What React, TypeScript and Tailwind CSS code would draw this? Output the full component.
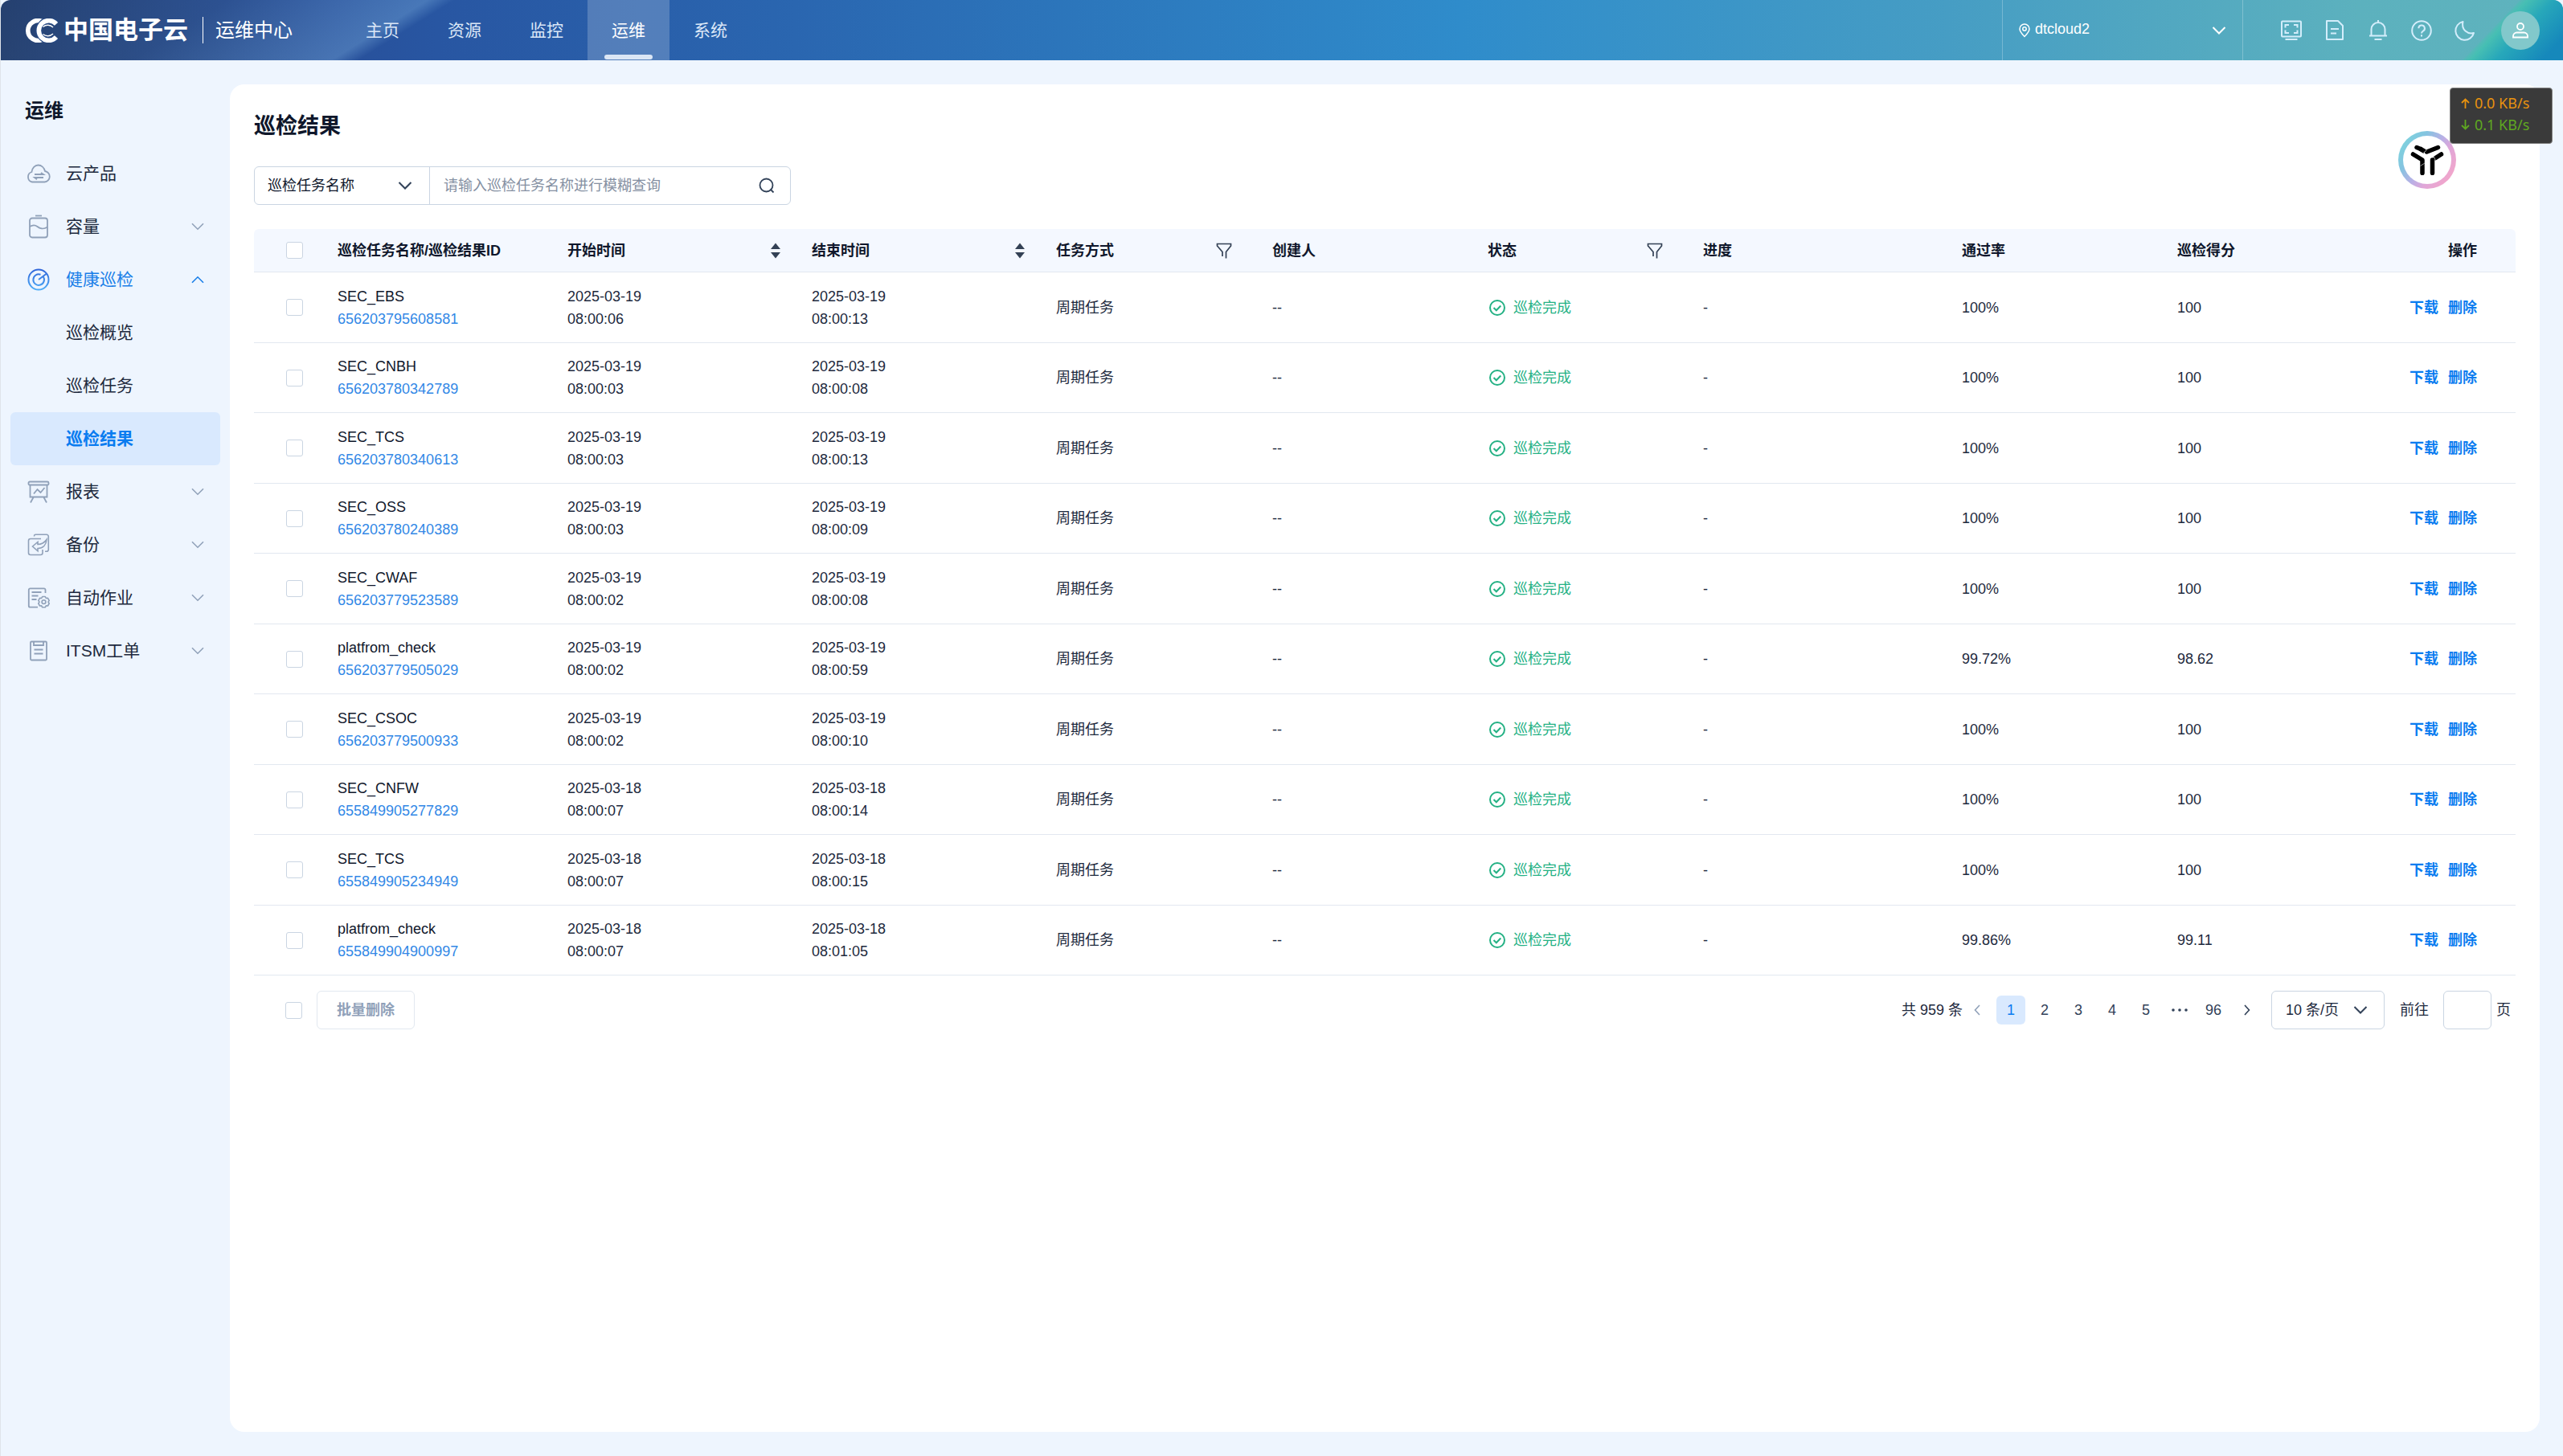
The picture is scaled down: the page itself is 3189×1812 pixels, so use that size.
import React from "react";

type IconProps = { className?: string };

const Chevron = ({ className = "" }: IconProps) => (
  <svg viewBox="0 0 18 10" width="18" height="10" fill="none" stroke="currentColor" strokeWidth="2" className={className} aria-hidden="true">
    <path d="M1.5 1 9 8.5 16.5 1" />
  </svg>
);

const SideChevron = ({ className = "" }: IconProps) => (
  <svg viewBox="0 0 16 10" width="16" height="10" fill="none" stroke="currentColor" strokeWidth="1.6" className={className} aria-hidden="true">
    <path d="M1 1.2 8 8.2 15 1.2" />
  </svg>
);

const CloudIcon = () => (
  <svg viewBox="0 0 32 24" width="32" height="24" fill="none" stroke="currentColor" strokeWidth="1.8" aria-hidden="true">
    <path d="M8 22.5A6.5 6.5 0 0 1 7.4 10C8 5 11.500 1.500 15.500 1.500S23 4.600 24 9a6.800 6.800 0 0 1-.5 13.500Z" />
    <path d="M11 13h11l-3-2M22 17H11l3 2.300" strokeWidth="1.800" />
  </svg>
);

const BatteryIcon = () => (
  <svg viewBox="0 0 26 30" width="26" height="30" fill="none" stroke="currentColor" strokeWidth="1.800" aria-hidden="true">
    <path d="M9 1.500h8" />
    <rect x="2" y="4.500" width="22" height="24" rx="3" />
    <path d="M2 15c4-2.500 7-2 9.500 0S19 19 24 15.500" />
  </svg>
);

const RadarIcon = () => (
  <svg viewBox="0 0 28 28" width="28" height="28" fill="none" stroke="url(#radar)" strokeWidth="2" aria-hidden="true">
    <defs>
      <linearGradient id="radar" x1="0" y1="0" x2="0" y2="28" gradientUnits="userSpaceOnUse">
        <stop offset="0" stopColor="#2f62d8" />
        <stop offset="1" stopColor="#4fb0f8" />
      </linearGradient>
    </defs>
    <circle cx="14" cy="14" r="12.500" />
    <path d="M19.600 10A6.800 6.800 0 1 1 16.500 7.700" />
    <path d="M14 14 24 6.500" />
  </svg>
);

const ReportIcon = () => (
  <svg viewBox="0 0 28 28" width="28" height="28" fill="none" stroke="currentColor" strokeWidth="1.800" aria-hidden="true">
    <rect x="1.500" y="1.500" width="25" height="4" rx="1.500" />
    <path d="M3.500 6v14.500h21V6M7.500 21 4 27.500M20.500 21l3.500 6.500M8 16.500l4.500-5.500 4 4 5-6" />
  </svg>
);

const BackupIcon = () => (
  <svg viewBox="0 0 28 28" width="28" height="28" fill="none" stroke="currentColor" strokeWidth="1.600" aria-hidden="true">
    <path d="M8.500 3.500V3A1.800 1.800 0 0 1 10.300 1.300H24A2.300 2.300 0 0 1 26.300 3.600V20a2.300 2.300 0 0 1-2.300 2.300h-2" />
    <path d="M17 6.500H4A2.500 2.500 0 0 0 1.500 9v15A2.500 2.500 0 0 0 4 26.500h12.500A2.500 2.500 0 0 0 19 24v-4" />
    <path d="M6.500 16 13 10.500v3C18 13.500 21.500 11 24 7.500 23.500 14 19.500 18.500 13 18.500v3.300Z" />
  </svg>
);

const JobIcon = () => (
  <svg viewBox="0 0 28 28" width="28" height="28" fill="none" stroke="currentColor" strokeWidth="1.800" aria-hidden="true">
    <path d="M22.500 8V4.200A1.800 1.800 0 0 0 20.700 2.300H3.500A1.700 1.700 0 0 0 1.800 4v20a1.700 1.700 0 0 0 1.700 1.700h9.500" />
    <path d="M5.500 7h12M5.500 11.500h8M5.500 16h6" />
    <path d="M18.700 12.500h3.600l1 2 2.200-.2 1.700 3-1.200 1.800 1.200 1.900-1.700 3-2.200-.2-1 2h-3.600l-1-2-2.200.2-1.700-3 1.200-1.900-1.200-1.800 1.700-3 2.200.2Z" strokeWidth="1.600" strokeLinejoin="round" />
    <circle cx="20.500" cy="19.100" r="2.400" strokeWidth="1.600" />
  </svg>
);

const TicketIcon = () => (
  <svg viewBox="0 0 24 28" width="24" height="28" fill="none" stroke="currentColor" strokeWidth="1.800" aria-hidden="true">
    <rect x="2" y="2.500" width="20" height="23" rx="1.200" />
    <path d="M6 2.500V7h12V2.500M6.500 12.500h11M6.500 17.500h11" />
  </svg>
);

const SortIcon = () => (
  <svg viewBox="0 0 12 20" width="12" height="20" fill="#334155" aria-hidden="true">
    <path d="M6 .5 12 8H0ZM6 19.500 0 12h12Z" />
  </svg>
);

const FilterIcon = () => (
  <svg viewBox="0 0 20 20" width="20" height="20" fill="none" stroke="#334155" strokeWidth="1.700" aria-hidden="true">
    <path d="M8 17V11.500L1.500 4V1.500h17V4L12.500 11.500V19.500" />
  </svg>
);

const CheckCircle = () => (
  <svg viewBox="0 0 20 20" width="20" height="20" fill="none" stroke="currentColor" strokeWidth="2" aria-hidden="true">
    <circle cx="10" cy="10" r="9" />
    <path d="m5.500 10 3.300 3.300L14.300 7.500" />
  </svg>
);

const HeaderIcon = ({ name }: { name: string }) => (
  <svg viewBox="0 0 28 28" width="28" height="28" fill="none" stroke="#d3edfb" strokeWidth="2" aria-hidden="true">
    {name === "screen" && (
      <>
        <rect x="2" y="2.500" width="24" height="19" rx="1" />
        <path d="M6.500 25h15" />
        <path d="M11 7H6.500v3.500M17 7h4.500v3.500M11 17H6.500v-3.500M17 17h4.500v-3.500" />
      </>
    )}
    {name === "doc" && (
      <>
        <path d="M4 2h14l6 6v17H4Z" strokeLinejoin="round" />
        <path d="M9 12h10M9 17.500h7" />
      </>
    )}
    {name === "bell" && (
      <path d="M14 1v3M3 20.500h22M5.500 20.500V12.500a8.500 8.500 0 0 1 17 0v8M9.500 25h9" />
    )}
    {name === "help" && (
      <>
        <circle cx="14" cy="14" r="11.800" />
        <path d="M10.300 11.300a3.800 3.800 0 1 1 5.600 3.300c-1.300.8-1.900 1.400-1.900 3M14 19.300v2.200" />
      </>
    )}
    {name === "moon" && (
      <path d="M11.500 3A11.500 11.500 0 1 0 25 17C17.500 19 9 13 11.500 3Z" strokeLinejoin="round" />
    )}
  </svg>
);

const Logo = () => (
  <svg viewBox="0 0 42 30" width="42" height="30" fill="none" aria-hidden="true">
    <path d="M21.500 3.800A12.400 12.400 0 1 0 21.500 26.200" stroke="#fff" strokeWidth="5.600" />
    <path d="M39 6.800A12.400 12.400 0 1 0 39 23.200" stroke="#274a86" strokeWidth="8" />
    <path d="M39 6.800A12.400 12.400 0 1 0 39 23.200" stroke="#fff" strokeWidth="5.600" />
    <path d="M22.500 10.500c3.500-3 9-3 12.500.5M22.500 19.500c3.500 3 9 3 12.500-.5" stroke="#fff" strokeWidth="1.400" />
  </svg>
);

const HeaderDecor = () => (
  <>
    <svg viewBox="0 0 580 75" width="580" height="75" className="absolute left-0 top-0" aria-hidden="true">
      <defs>
        <linearGradient id="sheen" x1="0" y1="0" x2="159" y2="254" gradientUnits="userSpaceOnUse">
          <stop offset="0" stopColor="#86bbe6" stopOpacity="0" />
          <stop offset="0.500" stopColor="#86bbe6" stopOpacity="0.060" />
          <stop offset="0.940" stopColor="#86bbe6" stopOpacity="0.340" />
          <stop offset="1" stopColor="#86bbe6" stopOpacity="0" />
        </linearGradient>
      </defs>
      <rect width="580" height="75" fill="url(#sheen)" />
    </svg>
    <svg viewBox="0 0 189 75" width="189" height="75" className="absolute right-0 top-0" aria-hidden="true">
      <defs>
        <linearGradient id="corner" x1="100" y1="33" x2="167" y2="97" gradientUnits="userSpaceOnUse">
          <stop offset="0" stopColor="#5fb3bd" />
          <stop offset="0.100" stopColor="#47bfb3" />
          <stop offset="0.350" stopColor="#27a7ba" />
          <stop offset="0.800" stopColor="#1688bb" />
        </linearGradient>
      </defs>
      <path d="M136 0H189V75H64Z" fill="url(#corner)" />
    </svg>
  </>
);

const Header = () => (
  <header className="relative flex h-[75px] items-stretch overflow-hidden rounded-t-xl bg-[linear-gradient(90deg,#25406f_0%,#28509a_13%,#2856a2_17%,#2a66b0_31%,#2f8ccb_57%,#469dc4_76%,#5cb1be_92%,#5fb3bd_100%)] text-white">
    <HeaderDecor />
    <div className="relative flex items-center pl-[30px]">
      <Logo />
      <span className="ml-[6px] text-[31px] font-bold leading-none">中国电子云</span>
      <span className="ml-[18px] h-[33px] w-px bg-white" />
      <span className="ml-[15px] text-2xl">运维中心</span>
    </div>
    <nav className="relative ml-[61px] flex text-[21px]">
      {["主页", "资源", "监控", "运维", "系统"].map((t) =>
        t === "运维" ? (
          <a key={t} href="#ops" className="relative flex w-[102px] items-center justify-center bg-white/20">
            {t}
            <span className="absolute bottom-[1px] h-[6px] w-[60px] rounded-sm bg-[#dbe6f5]" />
          </a>
        ) : (
          <a key={t} href={"#" + t} className="flex w-[102px] items-center justify-center text-[#dbe7f7]">
            {t}
          </a>
        )
      )}
    </nav>
    <button className="relative ml-auto flex w-[300px] items-center border-x border-white/25 px-5 text-lg">
      <svg viewBox="0 0 14 18" width="14" height="18" fill="none" stroke="#fff" strokeWidth="1.500" aria-hidden="true">
        <path d="M7 16.500C4 13.500 1 10.500 1 7a6 6 0 0 1 12 0c0 3.500-3 6.500-6 9.500Z" />
        <circle cx="7" cy="7" r="2.200" />
      </svg>
      <span className="ml-[6px] pb-[3px]">dtcloud2</span>
      <Chevron className="ml-auto" />
    </button>
    <div className="relative flex items-center gap-[26px] pl-[46px] pr-[29px]">
      {["screen", "doc", "bell", "help", "moon"].map((n) => (
        <button key={n} aria-label={n}>
          <HeaderIcon name={n} />
        </button>
      ))}
      <button aria-label="account" className="ml-[5px] flex size-12 items-center justify-center rounded-full bg-[#82c8cb]">
        <svg viewBox="0 0 20 20" width="20" height="20" fill="none" stroke="#fff" strokeWidth="1.800" aria-hidden="true">
          <circle cx="10" cy="5" r="4" />
          <path d="M1 18.500V17a4.500 4.500 0 0 1 4.500-4.500h9A4.500 4.500 0 0 1 19 17v1.500Z" />
        </svg>
      </button>
    </div>
  </header>
);

type Entry = { label: string; icon?: React.ReactNode; open?: boolean; leaf?: boolean; active?: boolean };

const MENU: Entry[] = [
  { label: "云产品", icon: <CloudIcon />, leaf: true },
  { label: "容量", icon: <BatteryIcon /> },
  { label: "健康巡检", icon: <RadarIcon />, open: true },
  { label: "巡检概览", leaf: true },
  { label: "巡检任务", leaf: true },
  { label: "巡检结果", leaf: true, active: true },
  { label: "报表", icon: <ReportIcon /> },
  { label: "备份", icon: <BackupIcon /> },
  { label: "自动作业", icon: <JobIcon /> },
  { label: "ITSM工单", icon: <TicketIcon /> },
];

const itemClass = (e: Entry) => {
  if (e.active) return "bg-[#d9e9fe] font-bold text-[#0a7cf0]";
  if (e.open) return "text-[#1a7fe8]";
  return "text-slate-800";
};

const Sidebar = () => (
  <aside className="w-[285px] shrink-0 px-3">
    <h2 className="pl-[18px] pt-[45px] text-2xl font-bold leading-9 text-slate-900">运维</h2>
    <ul className="mt-[27px] text-[21px]">
      {MENU.map((e) => (
        <li key={e.label}>
          <a href={"#" + e.label} className={"flex h-[66px] items-center rounded-md pr-5 " + itemClass(e)}>
            <span className="flex w-[69px] items-center justify-center text-slate-400">{e.icon}</span>
            {e.label}
            {!e.leaf && (e.open ? <SideChevron className="ml-auto rotate-180" /> : <SideChevron className="ml-auto text-slate-400" />)}
          </a>
        </li>
      ))}
    </ul>
  </aside>
);

const Checkbox = ({ label }: { label: string }) => (
  <input
    type="checkbox"
    aria-label={label}
    className="block size-[21px] appearance-none rounded-[3px] border border-slate-300 bg-white checked:bg-blue-500"
  />
);

type Row = [string, string, string, string, string, string, string];

const ROWS: Row[] = [
  ["SEC_EBS", "656203795608581", "2025-03-19", "08:00:06", "08:00:13", "100%", "100"],
  ["SEC_CNBH", "656203780342789", "2025-03-19", "08:00:03", "08:00:08", "100%", "100"],
  ["SEC_TCS", "656203780340613", "2025-03-19", "08:00:03", "08:00:13", "100%", "100"],
  ["SEC_OSS", "656203780240389", "2025-03-19", "08:00:03", "08:00:09", "100%", "100"],
  ["SEC_CWAF", "656203779523589", "2025-03-19", "08:00:02", "08:00:08", "100%", "100"],
  ["platfrom_check", "656203779505029", "2025-03-19", "08:00:02", "08:00:59", "99.72%", "98.62"],
  ["SEC_CSOC", "656203779500933", "2025-03-19", "08:00:02", "08:00:10", "100%", "100"],
  ["SEC_CNFW", "655849905277829", "2025-03-18", "08:00:07", "08:00:14", "100%", "100"],
  ["SEC_TCS", "655849905234949", "2025-03-18", "08:00:07", "08:00:15", "100%", "100"],
  ["platfrom_check", "655849904900997", "2025-03-18", "08:00:07", "08:01:05", "99.86%", "99.11"],
];

const SearchBar = () => (
  <form className="mt-[31px] flex h-12 w-[668px] items-stretch rounded-md border border-slate-300 text-lg">
    <div className="relative flex w-[218px] items-center border-r border-slate-300">
      <select aria-label="搜索字段" className="h-full w-full appearance-none bg-transparent pl-4 text-slate-900 outline-none">
        <option>巡检任务名称</option>
      </select>
      <Chevron className="pointer-events-none absolute right-[21px] text-slate-700" />
    </div>
    <input
      aria-label="巡检任务名称"
      placeholder="请输入巡检任务名称进行模糊查询"
      className="min-w-0 flex-1 bg-transparent pl-[17px] outline-none placeholder:text-[#8590a2]"
    />
    <button type="button" aria-label="搜索" className="pl-2 pr-[19px] text-slate-700">
      <svg viewBox="0 0 20 20" width="20" height="20" fill="none" stroke="currentColor" strokeWidth="1.800" aria-hidden="true">
        <circle cx="9.500" cy="9.500" r="8" />
        <path d="m14.500 14.500 4 4" />
      </svg>
    </button>
  </form>
);

const HEADS: { label: string; tool?: "sort" | "filter" }[] = [
  { label: "巡检任务名称/巡检结果ID" },
  { label: "开始时间", tool: "sort" },
  { label: "结束时间", tool: "sort" },
  { label: "任务方式", tool: "filter" },
  { label: "创建人" },
  { label: "状态", tool: "filter" },
  { label: "进度" },
  { label: "通过率" },
  { label: "巡检得分" },
];

const ResultTable = () => (
  <table className="mt-[30px] w-full table-fixed border-separate border-spacing-0 text-left text-lg leading-7 text-slate-800">
    <colgroup>
      <col className="w-[89px]" />
      <col className="w-[286px]" />
      <col className="w-[304px]" />
      <col className="w-[304px]" />
      <col className="w-[269px]" />
      <col className="w-[268px]" />
      <col className="w-[268px]" />
      <col className="w-[322px]" />
      <col className="w-[268px]" />
      <col className="w-[200px]" />
      <col className="w-[236px]" />
    </colgroup>
    <thead>
      <tr className="h-[54px] text-slate-900 [&>th]:border-b [&>th]:border-slate-200 [&>th]:bg-[#f4f8ff]">
        <th className="rounded-tl-md pl-10">
          <Checkbox label="全选" />
        </th>
        {HEADS.map((h) => (
          <th key={h.label} className="pl-[15px] font-bold">
            <div className="flex items-center whitespace-nowrap">
              {h.label}
              {h.tool === "sort" && (
                <button aria-label={h.label + "排序"} className="ml-auto mr-6">
                  <SortIcon />
                </button>
              )}
              {h.tool === "filter" && (
                <button aria-label={h.label + "筛选"} className="ml-auto mr-[35px]">
                  <FilterIcon />
                </button>
              )}
            </div>
          </th>
        ))}
        <th className="rounded-tr-md pr-12 text-right font-bold">操作</th>
      </tr>
    </thead>
    <tbody>
      {ROWS.map(([name, id, date, start, end, rate, score]) => (
        <tr key={id} className="h-[88px] even:h-[87px] [&>td]:border-b [&>td]:border-slate-200 [&>td]:pl-[15px]">
          <td className="pl-10!">
            <Checkbox label={id} />
          </td>
          <td>
            <div className="text-slate-900">{name}</div>
            <a href={"#" + id} className="block text-[#3288e6]">
              {id}
            </a>
          </td>
          <td>
            <div>{date}</div>
            <div>{start}</div>
          </td>
          <td>
            <div>{date}</div>
            <div>{end}</div>
          </td>
          <td>周期任务</td>
          <td>--</td>
          <td>
            <div className="flex items-center gap-[10px] pl-[2px] text-[#24b184]">
              <CheckCircle />
              巡检完成
            </div>
          </td>
          <td>-</td>
          <td>{rate}</td>
          <td>{score}</td>
          <td>
            <div className="flex justify-end gap-3 pr-12 font-bold text-[#0a7cf0]">
              <button>下载</button>
              <button>删除</button>
            </div>
          </td>
        </tr>
      ))}
    </tbody>
  </table>
);

const pageBtn = "flex size-9 items-center justify-center rounded-md";

const Footer = () => (
  <div className="flex items-center pl-[39px] pr-[6px] pt-[19px] text-lg text-slate-800">
    <Checkbox label="全选本页" />
    <button disabled className="ml-[18px] h-12 w-[122px] rounded-md border border-slate-200 font-bold text-slate-400">
      批量删除
    </button>
    <span className="ml-auto">共 959 条</span>
    <nav className="flex items-center gap-[6px] text-slate-700">
      <button aria-label="上一页" className={pageBtn + " text-slate-400"}>
        <svg viewBox="0 0 8 14" width="8" height="14" fill="none" stroke="currentColor" strokeWidth="1.600" aria-hidden="true">
          <path d="M7 1 1.500 7 7 13" />
        </svg>
      </button>
      <button className={pageBtn + " bg-[#d9e9fe] text-[#0a7cf0]"}>1</button>
      <button className={pageBtn}>2</button>
      <button className={pageBtn}>3</button>
      <button className={pageBtn}>4</button>
      <button className={pageBtn}>5</button>
      <button aria-label="更多页" className={pageBtn}>
        <svg viewBox="0 0 20 4" width="20" height="4" fill="currentColor" aria-hidden="true">
          <circle cx="2" cy="2" r="1.800" />
          <circle cx="10" cy="2" r="1.800" />
          <circle cx="18" cy="2" r="1.800" />
        </svg>
      </button>
      <button className={pageBtn}>96</button>
      <button aria-label="下一页" className={pageBtn}>
        <svg viewBox="0 0 8 14" width="8" height="14" fill="none" stroke="currentColor" strokeWidth="1.600" aria-hidden="true">
          <path d="M1 1 6.500 7 1 13" />
        </svg>
      </button>
    </nav>
    <div className="relative ml-3 flex h-12 w-[141px] items-center rounded-md border border-slate-300">
      <select aria-label="每页条数" className="h-full w-full appearance-none bg-transparent pl-[17px] outline-none">
        <option>10 条/页</option>
      </select>
      <Chevron className="pointer-events-none absolute right-5 text-slate-700" />
    </div>
    <label className="ml-[19px] flex items-center">
      前往
      <input className="ml-[18px] mr-[6px] h-12 w-[60px] rounded-md border border-slate-300 text-center outline-none" />
      页
    </label>
  </div>
);

const FloatingWidgets = () => (
  <>
    <div className="absolute right-[133px] top-[163px] size-[72px] rounded-full bg-[linear-gradient(125deg,#7fd0de_15%,#84c4e0_30%,#b9b0e6_50%,#e0a6d8_65%,#f0a6cc_85%)] p-[6px]">
      <button aria-label="助手" className="flex size-full items-center justify-center rounded-full bg-white">
        <svg viewBox="0 0 42 38" width="42" height="38" fill="none" stroke="#000" strokeWidth="5.500" aria-hidden="true">
          <path d="M8 3.500 13 5.500M20.500 9 34.500 3.500" strokeLinecap="round" />
          <path d="m12 5 6 3.500" />
          <path d="M3.500 12 15 19v7M15 27v8.500M38.500 12l-7 4.500M27.500 19v16.500" strokeLinecap="round" strokeLinejoin="round" />
          <path d="M16 10.500 20.500 7M12.500 26.500 18 23M29 14l2.500 6" stroke="#999" strokeWidth="1" />
        </svg>
      </button>
    </div>
    <div className="absolute right-[13px] top-[109px] flex h-[70px] w-[128px] flex-col justify-center rounded-sm border border-[#808080] bg-[#3a3a3a] pb-1 pl-[13px] font-['Noto_Sans'] text-[18px] leading-[27px]">
      <div className="flex items-center gap-[6px] text-[#e8920f]">
        <svg viewBox="0 0 11 13" width="11" height="13" fill="none" stroke="currentColor" strokeWidth="1.800" aria-hidden="true">
          <path d="M5.500 13V1.500M1 6l4.500-4.500L10 6" />
        </svg>
        0.0 KB/s
      </div>
      <div className="flex items-center gap-[6px] text-[#5fa821]">
        <svg viewBox="0 0 11 13" width="11" height="13" fill="none" stroke="currentColor" strokeWidth="1.800" aria-hidden="true">
          <path d="M5.500 0v11.500M1 7l4.500 4.500L10 7" />
        </svg>
        0.1 KB/s
      </div>
    </div>
  </>
);

export default function App() {
  return (
    <div className="relative flex min-h-screen flex-col overflow-hidden border-l border-[#dfe4ea] bg-[#eef5fe] font-['Liberation_Sans','Noto_Sans_CJK_SC',sans-serif]">
      <Header />
      <div className="flex flex-1">
        <Sidebar />
        <main className="mb-[30px] mr-[29px] mt-[30px] min-w-0 flex-1 rounded-[18px] bg-white px-[30px] pt-[33px]">
          <h1 className="text-[27px] font-bold leading-[38px] text-slate-900">巡检结果</h1>
          <SearchBar />
          <ResultTable />
          <Footer />
        </main>
      </div>
      <FloatingWidgets />
    </div>
  );
}
